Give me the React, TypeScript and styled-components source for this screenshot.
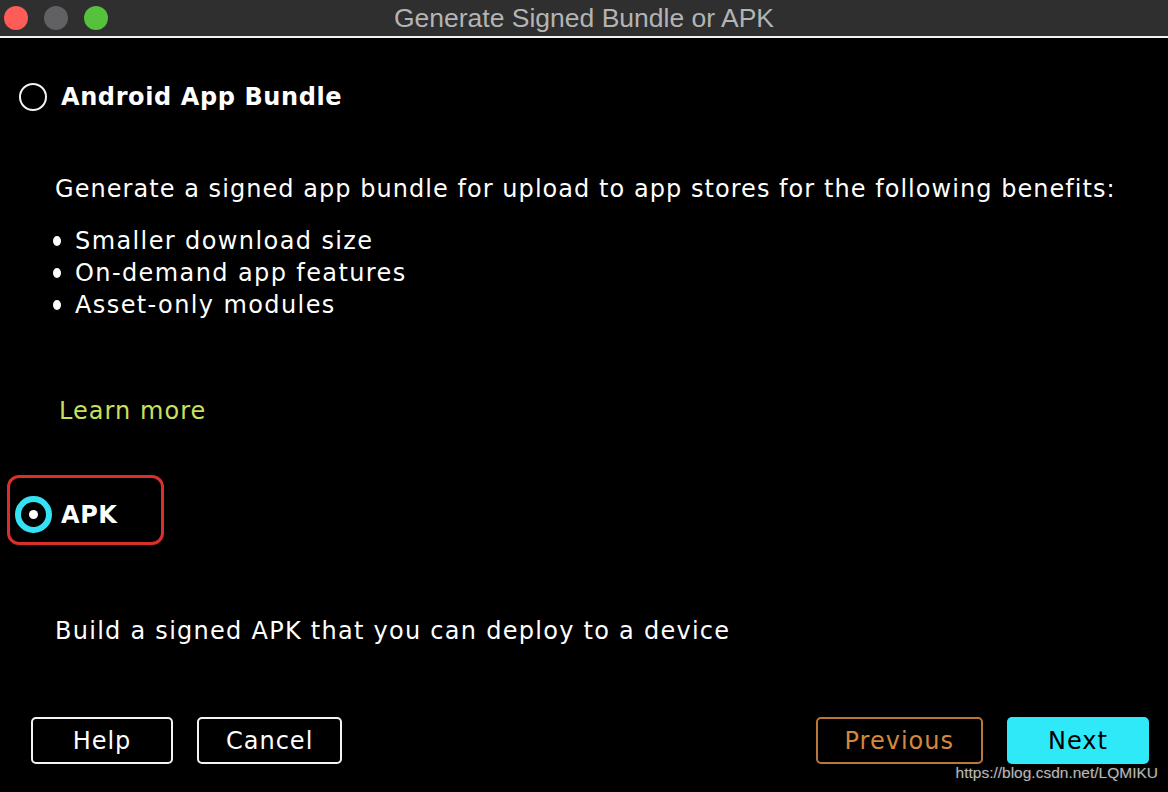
import styled, { createGlobalStyle } from "styled-components";

const GlobalStyle = createGlobalStyle`
  html, body {
    margin: 0;
    padding: 0;
    background: #000;
  }
  body {
    width: 1168px;
    height: 792px;
    overflow: hidden;
  }
`;

const Window = styled.div`
  position: relative;
  width: 1168px;
  height: 792px;
  background: #000;
  display: flex;
  flex-direction: column;
  font-family: "DejaVu Sans", sans-serif;
  color: #fff;
`;

const TitleBar = styled.div`
  height: 36px;
  flex-shrink: 0;
  background: #2f2f2f;
  border-bottom: 2px solid #f2f2f2;
  display: grid;
  grid-template-columns: 1fr auto 1fr;
  align-items: center;
`;

const Lights = styled.div`
  display: flex;
  gap: 16px;
  padding-left: 4px;
`;

const Light = styled.span<{ $color: string }>`
  width: 24px;
  height: 24px;
  border-radius: 50%;
  background: ${(p) => p.$color};
`;

const Title = styled.div`
  font-family: "Liberation Sans", Arial, sans-serif;
  font-size: 26.5px;
  color: #b4b4b4;
  white-space: nowrap;
`;

const Body = styled.div`
  flex: 1;
  display: flex;
  flex-direction: column;
`;

const OptionRow = styled.div`
  display: flex;
  align-items: center;
  height: 40px;
  margin-top: 39px;
  padding-left: 14px;
`;

const Highlight = styled.div`
  display: flex;
  align-items: center;
  box-sizing: border-box;
  width: 157px;
  height: 70px;
  margin-left: 7px;
  margin-top: 48px;
  padding: 9px 0 0 4px;
  border: 3px solid #dc2f2a;
  border-radius: 12px;
`;

const RadioSlot = styled.span`
  width: 38px;
  height: 38px;
  display: flex;
  align-items: center;
  justify-content: center;
  margin-right: 9px;
`;

const Radio = styled.span<{ $checked?: boolean }>`
  box-sizing: border-box;
  border-radius: 50%;
  display: flex;
  align-items: center;
  justify-content: center;
  width: ${(p) => (p.$checked ? "37px" : "28px")};
  height: ${(p) => (p.$checked ? "37px" : "28px")};
  border: ${(p) => (p.$checked ? "6px solid #35e2f4" : "2px solid #f4f4f4")};
  &::after {
    content: "";
    display: ${(p) => (p.$checked ? "block" : "none")};
    width: 9px;
    height: 9px;
    border-radius: 50%;
    background: #fff;
  }
`;

const OptionLabel = styled.span`
  font-family: "DejaVu Sans", sans-serif;
  font-weight: 700;
  font-size: 24px;
  letter-spacing: 0.6px;
`;

const Text = styled.p<{ $top: number; $spacing?: number }>`
  margin: ${(p) => p.$top}px 0 0 55px;
  font-size: 24px;
  line-height: 32px;
  letter-spacing: ${(p) => p.$spacing ?? 1.05}px;
  white-space: nowrap;
`;

const Bullets = styled.ul`
  list-style: none;
  margin: 20px 0 0 53px;
  padding: 0;
`;

const Bullet = styled.li`
  display: flex;
  align-items: center;
  font-size: 24px;
  line-height: 32px;
  letter-spacing: 1.4px;
  &::before {
    content: "";
    width: 8px;
    height: 10px;
    border-radius: 50%;
    background: #fff;
    margin-right: 14px;
  }
`;

const LearnMore = styled.a`
  display: block;
  margin: 74px 0 0 59px;
  font-size: 24px;
  line-height: 32px;
  letter-spacing: 1.05px;
  color: #c9e05c;
  text-decoration: none;
`;

const ButtonBar = styled.div`
  display: flex;
  align-items: center;
  margin-top: 70px;
  padding: 0 19px 0 31px;
`;

const Spacer = styled.div`
  flex: 1;
`;

const Button = styled.button<{ $variant?: "default" | "secondary" | "primary" }>`
  box-sizing: border-box;
  min-width: 142px;
  height: 47px;
  padding: 0 27px;
  margin-right: 24px;
  border-radius: 5px;
  font-family: "DejaVu Sans", sans-serif;
  font-size: 24px;
  letter-spacing: 1px;
  cursor: pointer;
  background: ${(p) => (p.$variant === "primary" ? "#2fe8f8" : "#000")};
  color: ${(p) =>
    p.$variant === "primary" ? "#000" : p.$variant === "secondary" ? "#d4883e" : "#fff"};
  border: 2px solid
    ${(p) =>
      p.$variant === "primary" ? "#2fe8f8" : p.$variant === "secondary" ? "#b87838" : "#f4f4f4"};
  &:last-child {
    margin-right: 0;
  }
`;

const Watermark = styled.div`
  position: absolute;
  right: 10px;
  bottom: 10px;
  font-family: "Liberation Sans", Arial, sans-serif;
  font-size: 15.5px;
  color: #b8b8b8;
  text-shadow: 0 0 2px #333;
`;

function App() {
  return (
    <Window>
      <GlobalStyle />
      <TitleBar>
        <Lights>
          <Light $color="#fe5c57" />
          <Light $color="#616163" />
          <Light $color="#55c13d" />
        </Lights>
        <Title>Generate Signed Bundle or APK</Title>
        <span />
      </TitleBar>
      <Body>
        <OptionRow>
          <RadioSlot>
            <Radio />
          </RadioSlot>
          <OptionLabel>Android App Bundle</OptionLabel>
        </OptionRow>
        <Text $top={56}>
          Generate a signed app bundle for upload to app stores for the following benefits:
        </Text>
        <Bullets>
          <Bullet>Smaller download size</Bullet>
          <Bullet>On-demand app features</Bullet>
          <Bullet>Asset-only modules</Bullet>
        </Bullets>
        <LearnMore>Learn more</LearnMore>
        <Highlight>
          <RadioSlot>
            <Radio $checked />
          </RadioSlot>
          <OptionLabel>APK</OptionLabel>
        </Highlight>
        <Text $top={70} $spacing={1.27}>
          Build a signed APK that you can deploy to a device
        </Text>
        <ButtonBar>
          <Button>Help</Button>
          <Button>Cancel</Button>
          <Spacer />
          <Button $variant="secondary">Previous</Button>
          <Button $variant="primary">Next</Button>
        </ButtonBar>
      </Body>
      <Watermark>https://blog.csdn.net/LQMIKU</Watermark>
    </Window>
  );
}

export default App;
